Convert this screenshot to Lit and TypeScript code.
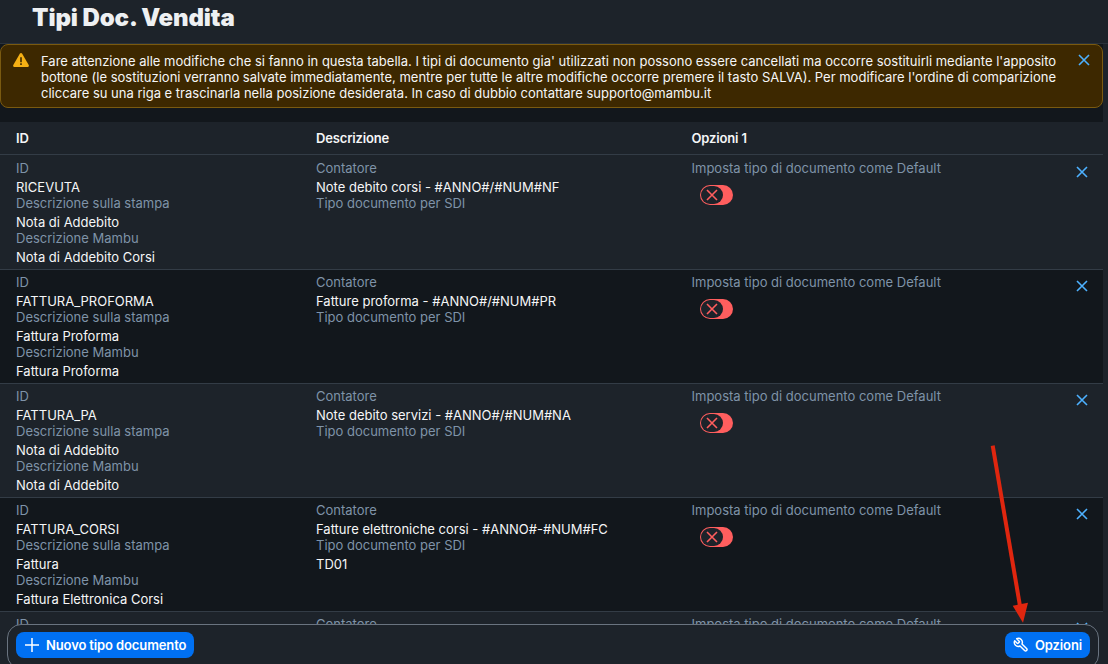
import { LitElement, html, css } from "lit";
import { customElement } from "lit/decorators.js";

const rows = [
  { id: "RICEVUTA", st: "Nota di Addebito", ma: "Nota di Addebito Corsi", co: "Note debito corsi - #ANNO#/#NUM#NF", sdi: "" },
  { id: "FATTURA_PROFORMA", st: "Fattura Proforma", ma: "Fattura Proforma", co: "Fatture proforma - #ANNO#/#NUM#PR", sdi: "" },
  { id: "FATTURA_PA", st: "Nota di Addebito", ma: "Nota di Addebito", co: "Note debito servizi - #ANNO#/#NUM#NA", sdi: "" },
  { id: "FATTURA_CORSI", st: "Fattura", ma: "Fattura Elettronica Corsi", co: "Fatture elettroniche corsi - #ANNO#-#NUM#FC", sdi: "TD01" },
];

@customElement("app-root")
export class AppRoot extends LitElement {
  static styles = css`
    :host {
      display: block;
      position: relative;
      height: 664px;
      overflow: hidden;
      background: #1d232a;
      color: #f5f6f7;
      font-family: "Inter", "Liberation Sans", sans-serif;
      font-size: 13px;
      line-height: 16px;
    }
    .content { width: 1103px; }
    .title {
      height: 44px;
      box-sizing: border-box;
      padding: 2px 0 0 32px;
      font-size: 24px;
      line-height: 32px;
      font-weight: 900;
      letter-spacing: -0.1px;
      color: #eef0f2;
      width: 1108px;
      border-bottom: 1px solid #2a323b;
    }
    .alert-wrap { background: #12171c; padding-bottom: 14px; }
    .alert {
      box-sizing: border-box;
      height: 64px;
      display: flex;
      padding: 8px 12px 0 12px;
      background: #3d2800;
      border: 1px solid #7a5a10;
      border-radius: 8px;
      color: #f5f6f7;
    }
    .alert-ico { width: 16px; height: 14px; margin: 0 12px 0 0; flex: none; }
    .alert-text { flex: 1; }
    .close { width: 12px; height: 12px; color: #4db1ff; flex: none; }
    .alert .close { margin: 1px 0 0 12px; }
    .row {
      display: grid;
      grid-template-columns: 300px 375.5px 1fr 12px;
      padding: 0 15px 0 16px;
      box-sizing: border-box;
      border-bottom: 1px solid #333c46;
    }
    .head {
      height: 33px;
      background: #1d232a;
      font-weight: 600;
      letter-spacing: -0.15px;
      align-items: center;
      color: #f5f6f7;
    }
    .item { height: 114px; padding-top: 4px; }
    .item.first { height: 115px; padding-top: 5px; }
    .item.dark { background: #12171c; }
    .label { color: #7f93a8; height: 16px; }
    .value { color: #f5f6f7; height: 16px; padding-top: 3px; }
    .item .close { margin-top: 6px; }
    .toggle {
      box-sizing: border-box;
      width: 33px;
      height: 20px;
      margin: 9px 0 0 8.5px;
      padding: 1px;
      background: #ff5e5e;
      border-radius: 10px;
    }
    .knob {
      width: 22px;
      height: 18px;
      border-radius: 9px;
      background: #1d232a;
      display: flex;
      align-items: center;
      justify-content: center;
    }
    .knob svg { width: 12px; height: 12px; color: #ff5e5e; }
    .footer {
      position: absolute;
      left: 7px;
      right: 9px;
      top: 624px;
      height: 45px;
      box-sizing: border-box;
      background: #1d232a;
      border: 1px solid #6a7480;
      border-radius: 14px;
      display: flex;
      justify-content: space-between;
      padding: 7px 8px;
    }
    .btn {
      height: 26px;
      display: flex;
      align-items: center;
      gap: 6px;
      background: #0070f2;
      color: #fff;
      border-radius: 8px;
      font-weight: 600;
      letter-spacing: -0.12px;
      padding: 0 8px;
    }
    .btn svg { width: 16px; height: 16px; flex: none; }
    .arrow { position: absolute; left: 980px; top: 440px; width: 60px; height: 190px; }
  `;

  private x() {
    return html`<svg class="close" viewBox="0 0 12 12" fill="none" stroke="currentColor" stroke-width="1.6"><path d="M1 1l10 10M11 1L1 11"/></svg>`;
  }

  private row(r: (typeof rows)[number], i: number) {
    return html`<div class="row item ${i % 2 ? "dark" : ""} ${i === 0 ? "first" : ""}">
      <div>
        <div class="label">ID</div>
        <div class="value">${r.id}</div>
        <div class="label">Descrizione sulla stampa</div>
        <div class="value">${r.st}</div>
        <div class="label">Descrizione Mambu</div>
        <div class="value">${r.ma}</div>
      </div>
      <div>
        <div class="label">Contatore</div>
        <div class="value">${r.co}</div>
        <div class="label">Tipo documento per SDI</div>
        <div class="value">${r.sdi}</div>
      </div>
      <div>
        <div class="label">Imposta tipo di documento come Default</div>
        <div class="toggle"><div class="knob">
          <svg viewBox="0 0 12 12" fill="none" stroke="currentColor" stroke-width="1.6"><path d="M1 1l10 10M11 1L1 11"/></svg>
        </div></div>
      </div>
      ${this.x()}
    </div>`;
  }

  render() {
    return html`
      <div class="content">
        <div class="title">Tipi Doc. Vendita</div>
        <div class="alert-wrap">
          <div class="alert">
            <svg class="alert-ico" viewBox="0 0 16 14"><path d="M8 0c.5 0 .9.3 1.2.7l6.5 11.4c.5.9-.1 1.9-1.1 1.9H1.4c-1 0-1.6-1-1.1-1.9L6.8.7C7.1.3 7.5 0 8 0z" fill="#f5b014"/><path d="M7.2 4.2h1.6v5H7.2zM7.2 10.3h1.6v1.7H7.2z" fill="#3d2800"/></svg>
            <div class="alert-text">Fare attenzione alle modifiche che si fanno in questa tabella. I tipi di documento gia' utilizzati non possono essere cancellati ma occorre sostituirli mediante l'apposito bottone (le sostituzioni verranno salvate immediatamente, mentre per tutte le altre modifiche occorre premere il tasto SALVA). Per modificare l'ordine di comparizione cliccare su una riga e trascinarla nella posizione desiderata. In caso di dubbio contattare supporto@mambu.it</div>
            ${this.x()}
          </div>
        </div>
        <div class="row head"><div>ID</div><div>Descrizione</div><div>Opzioni 1</div><div></div></div>
        ${rows.map((r, i) => this.row(r, i))}
        <div class="row item">
          <div class="label">ID</div>
          <div class="label">Contatore</div>
          <div class="label">Imposta tipo di documento come Default</div>
          ${this.x()}
        </div>
      </div>
      <div class="footer">
        <div class="btn">
          <svg viewBox="0 0 16 16" fill="none" stroke="#fff" stroke-width="1.5"><path d="M8 1v14M1 8h14"/></svg>
          Nuovo tipo documento
        </div>
        <div class="btn">
          <svg viewBox="0 0 24 24" fill="none" stroke="#fff" stroke-width="2.2" stroke-linejoin="round" stroke-linecap="round"><path transform="translate(24 0) scale(-1 1)" d="M14.7 6.3a1 1 0 0 0 0 1.4l1.6 1.6a1 1 0 0 0 1.4 0l3.77-3.77a6 6 0 0 1-7.94 7.94l-6.91 6.91a2.12 2.12 0 0 1-3-3l6.91-6.91a6 6 0 0 1 7.94-7.94l-3.76 3.76z"/></svg>
          Opzioni
        </div>
      </div>
      <svg class="arrow" viewBox="0 0 60 190">
        <path d="M12.7 5.7 L40 166" stroke="#e0260f" stroke-width="4" fill="none"/>
        <path d="M43 182.7 L32.7 165.7 L48 162.7 Z" fill="#e0260f"/>
      </svg>
    `;
  }
}
